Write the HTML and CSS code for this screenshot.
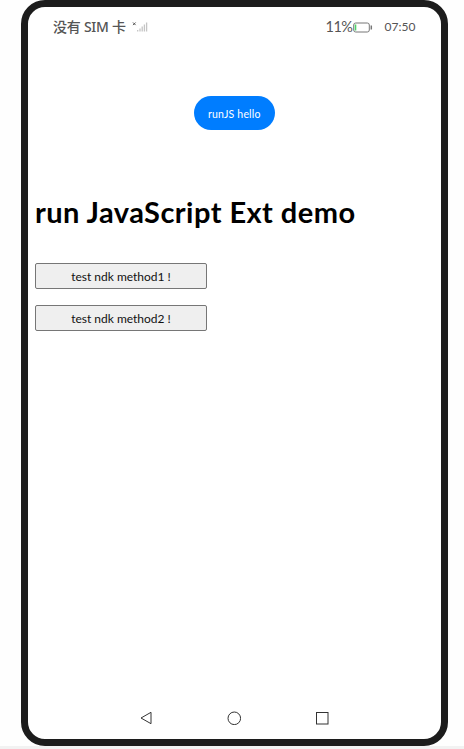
FILE: index.html
```html
<!DOCTYPE html>
<html lang="zh">
<head>
<meta charset="utf-8">
<title>run JavaScript Ext demo</title>
<link rel="stylesheet" href="styles.css">
</head>
<body>
<div class="phone">
  <header class="status">
    <span class="carrier">没有 SIM 卡</span>
    <svg class="signal" width="16" height="12" viewBox="0 0 16 12">
      <path d="M1 1.500l2.600 2.600M3.600 1.500L1 4.100" stroke="#555" stroke-width="1"/>
      <path d="M5.700 10.500v-1.500M8 10.500v-3M10.200 10.500v-5M12.400 10.500v-7M14.600 10.500v-9" stroke="#c4c4c4" stroke-width="1.300"/>
    </svg>
    <span class="percent">11%</span>
    <svg class="battery" width="20" height="11" viewBox="0 0 20 11">
      <rect x=".7" y="1" width="15.600" height="9" rx="2" fill="#fff" stroke="#777"/>
      <path d="M2.500 2.500v6" stroke="#4fd36b" stroke-width="1.600"/>
      <path d="M18.300 3.500v4" stroke="#777" stroke-width="1.500"/>
    </svg>
    <span class="clock">07:50</span>
  </header>
  <div class="action"><button class="pill">runJS hello</button></div>
  <main class="web">
    <h1 class="title">run JavaScript Ext demo</h1>
    <button class="native">test ndk method1 !</button>
    <button class="native">test ndk method2 !</button>
  </main>
  <nav class="nav">
    <svg width="14" height="14" viewBox="0 0 14 14"><path d="M12 1.300v11.400L2 7z"/></svg>
    <svg width="14" height="14" viewBox="0 0 14 14"><circle cx="7.300" cy="7.300" r="6.300"/></svg>
    <svg width="14" height="14" viewBox="0 0 14 14"><rect x="1.500" y="1.500" width="11.500" height="11.500"/></svg>
  </nav>
</div>
</body>
</html>
```

FILE: styles.css
```css
* { box-sizing: border-box; }
body {
  margin: 0;
  height: 749px;
  overflow: hidden;
  background: linear-gradient(#fefefe 746px, #f2f2f2 746px);
  font-family: Lato, "Noto Sans CJK SC", sans-serif;
}
.phone {
  display: flex;
  flex-direction: column;
  width: 426.500px;
  height: 746px;
  margin-left: 21px;
  border: 7px solid #1c1c1c;
  border-radius: 24px;
  background: #fff;
}
.status {
  display: flex;
  align-items: center;
  height: 40px;
  padding: 0 25px 0 25px;
  color: #555;
  white-space: nowrap;
}
.carrier { width: 73px; font: 500 14px/20px "Noto Sans", "Noto Sans CJK SC", sans-serif; letter-spacing: -.25px; }
.signal { margin-left: 6px; }
.percent { width: 27px; margin-left: auto; font-size: 14.500px; line-height: 20px; letter-spacing: -.5px; }
.battery { flex: none; }
.clock { width: 31px; margin-left: 12px; font-size: 12px; line-height: 20px; }
.action { display: flex; justify-content: center; margin-top: 49px; }
.pill {
  width: 81px;
  height: 34px;
  padding: 2px 0 0;
  border: 0;
  border-radius: 17px;
  background: #007dff;
  color: #fff;
  font-family: inherit;
  font-size: 10.500px;
  letter-spacing: .18px;
}
.web {
  display: flex;
  flex-direction: column;
  align-items: flex-start;
  padding: 62px 7px 0;
}
.title { margin: 0 0 31px; font-size: 29px; line-height: 40px; font-weight: 700; letter-spacing: .45px; color: #000; white-space: nowrap; }
.native {
  width: 172px;
  height: 26px;
  margin-bottom: 16px;
  padding: 0;
  border: 1px solid #767676;
  border-radius: 2px;
  background: #efefef;
  color: #111;
  font-family: inherit;
  font-size: 12px;
}
.nav {
  display: flex;
  justify-content: space-between;
  width: 190px;
  margin: auto 0 14px 111px;
}
.nav svg { fill: none; stroke: #333; stroke-width: 1; }
```
